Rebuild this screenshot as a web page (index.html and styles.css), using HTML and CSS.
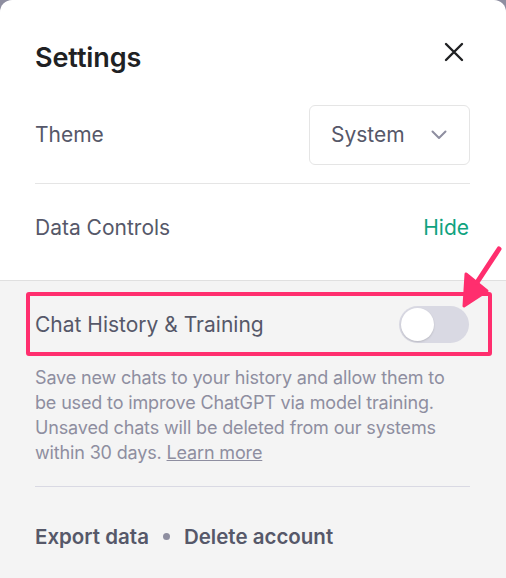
FILE: index.html
```html
<!DOCTYPE html>
<html lang="en">
<head>
    <meta charset="UTF-8">
    <meta name="viewport" content="width=device-width, initial-scale=1.0">
    <title>Settings</title>
    <link rel="stylesheet" href="styles.css">
</head>
<body>
    <div class="modal">
        <div class="modal-top">
            <div class="header">
                <h1>Settings</h1>
                <button class="close-btn" aria-label="Close">
                    <svg width="20" height="20" viewBox="0 0 20 20">
                        <path d="M2 2 L18 18 M18 2 L2 18" stroke="#202123" stroke-width="2.4" stroke-linecap="round"/>
                    </svg>
                </button>
            </div>

            <div class="row theme-row">
                <span class="row-label">Theme</span>
                <div class="select">
                    <span>System</span>
                    <svg width="16" height="10" viewBox="0 0 16 10">
                        <path d="M1.5 1.5 L8 8 L14.5 1.5" fill="none" stroke="#8e8ea0" stroke-width="2" stroke-linecap="round" stroke-linejoin="round"/>
                    </svg>
                </div>
            </div>

            <div class="row data-row">
                <span class="row-label">Data Controls</span>
                <a class="hide-link">Hide</a>
            </div>
        </div>

        <div class="modal-bottom">
            <div class="highlight">
                <span class="row-label">Chat History &amp; Training</span>
                <div class="toggle"><div class="knob"></div></div>
            </div>

            <p class="description">
                Save new chats to your history and allow them to be used to improve ChatGPT via model training. Unsaved chats will be deleted from our systems within 30 days. <a class="learn-more">Learn more</a>
            </p>

            <div class="footer">
                <a>Export data</a>
                <span class="dot"></span>
                <a>Delete account</a>
            </div>
        </div>

        <svg class="arrow" width="60" height="80" viewBox="0 0 60 80">
            <path d="M55 6 L30 44" stroke="#ff2e6e" stroke-width="5" stroke-linecap="round"/>
            <path d="M20 63 L22 31 L43 48 Z" fill="#ff2e6e" stroke="#ff2e6e" stroke-width="3" stroke-linejoin="round"/>
        </svg>
    </div>
</body>
</html>
```

FILE: styles.css
```css
* {
    margin: 0;
    padding: 0;
    box-sizing: border-box;
}

body {
    font-family: Inter, 'Noto Sans', sans-serif;
    background: #8e8ea0;
    color: #565869;
}

.modal {
    position: relative;
    background: white;
    border-radius: 12px 12px 0 0;
    min-height: 578px;
    overflow: hidden;
}

.modal-top {
    padding: 0 36px 0 35px;
}

.header {
    display: flex;
    align-items: center;
    justify-content: space-between;
    height: 104px;
    padding-top: 10px;
}

.header h1 {
    font-size: 27px;
    font-weight: 600;
    color: #202123;
    letter-spacing: -0.1px;
}

.close-btn {
    background: none;
    border: none;
    display: flex;
    margin-right: 6px;
    margin-top: -10px;
}

.row {
    display: flex;
    align-items: center;
    justify-content: space-between;
}

.row-label {
    font-size: 21px;
    color: #565869;
}

.theme-row {
    height: 80px;
    padding-bottom: 18px;
    border-bottom: 1px solid #e5e5e5;
}

.select {
    display: flex;
    align-items: center;
    justify-content: space-between;
    width: 161px;
    height: 60px;
    padding: 0 22px 0 21px;
    border: 1px solid #e5e5e5;
    border-radius: 6px;
    font-size: 21px;
    color: #565869;
}

.data-row {
    height: 96px;
    padding-bottom: 10px;
}

.hide-link {
    font-size: 21px;
    color: #10a37f;
    margin-right: 1px;
}

.modal-bottom {
    background: #f4f4f4;
    border-top: 1px solid #e0e0e0;
    padding: 11px 14px 0 26px;
    min-height: 298px;
}

.highlight {
    display: flex;
    align-items: center;
    justify-content: space-between;
    height: 64px;
    padding: 0 19px 0 5px;
    border: 4px solid #ff2e6e;
    border-radius: 3px;
}

.toggle {
    width: 70px;
    height: 37px;
    border-radius: 19px;
    background: #d9d9e3;
    padding: 2px;
}

.knob {
    width: 33px;
    height: 33px;
    border-radius: 50%;
    background: white;
    box-shadow: 0 1px 2px rgba(0, 0, 0, 0.15);
}

.description {
    margin: 9px 22px 0 9px;
    font-size: 18px;
    line-height: 25px;
    letter-spacing: -0.15px;
    color: #8e8ea0;
    padding-bottom: 21px;
    border-bottom: 1px solid #d9d9e3;
}

.learn-more {
    text-decoration: underline;
    color: #8e8ea0;
}

.footer {
    display: flex;
    align-items: center;
    gap: 14px;
    margin-left: 9px;
    height: 100px;
    padding-bottom: 2px;
    font-size: 20.5px;
    font-weight: 600;
    color: #565869;
}

.dot {
    width: 7px;
    height: 7px;
    border-radius: 50%;
    background: #8e8ea0;
}

.arrow {
    position: absolute;
    left: 444px;
    top: 243px;
}
```
